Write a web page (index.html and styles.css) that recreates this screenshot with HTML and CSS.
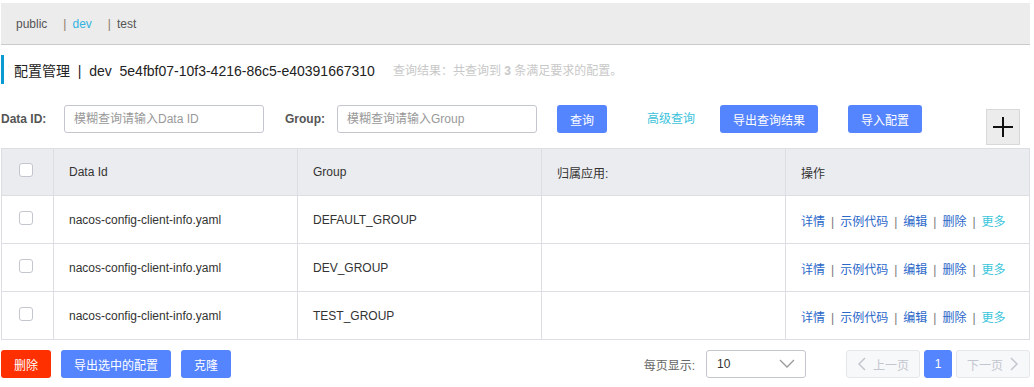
FILE: index.html
```html
<!DOCTYPE html>
<html lang="zh-CN">
<head>
    <meta charset="UTF-8">
    <title>配置管理</title>
    <link rel="stylesheet" href="styles.css">
</head>
<body>
    <div class="ns-bar">
        <span class="ns">public</span>
        <span class="ns active"><i>|</i>dev</span>
        <span class="ns"><i>|</i>test</span>
    </div>

    <div class="page-title">
        <span class="title-main">配置管理&nbsp;&nbsp;|&nbsp;&nbsp;dev&nbsp;&nbsp;5e4fbf07-10f3-4216-86c5-e40391667310</span>
        <span class="title-info">查询结果：共查询到 <b>3</b> 条满足要求的配置。</span>
    </div>

    <div class="search-row">
        <label class="field-label">Data ID:</label>
        <input class="field-input" placeholder="模糊查询请输入Data ID">
        <label class="field-label group-label">Group:</label>
        <input class="field-input" placeholder="模糊查询请输入Group">
        <button class="btn btn-primary btn-query">查询</button>
        <a class="adv-link">高级查询</a>
        <button class="btn btn-primary btn-export">导出查询结果</button>
        <button class="btn btn-primary btn-import">导入配置</button>
        <button class="btn-plus">
            <svg width="22" height="22" viewBox="0 0 22 22"><path d="M11 1v20M1 11h20" stroke="#111" stroke-width="2"/></svg>
        </button>
    </div>

    <table class="cfg-table">
        <thead>
            <tr>
                <th class="col-check"><span class="checkbox"></span></th>
                <th class="col-id">Data Id</th>
                <th class="col-group">Group</th>
                <th class="col-app">归属应用:</th>
                <th class="col-op">操作</th>
            </tr>
        </thead>
        <tbody>
            <tr>
                <td class="col-check"><span class="checkbox"></span></td>
                <td>nacos-config-client-info.yaml</td>
                <td>DEFAULT_GROUP</td>
                <td></td>
                <td class="ops"><a>详情</a><i>|</i><a>示例代码</a><i>|</i><a>编辑</a><i>|</i><a>删除</a><i>|</i><a class="more">更多</a></td>
            </tr>
            <tr>
                <td class="col-check"><span class="checkbox"></span></td>
                <td>nacos-config-client-info.yaml</td>
                <td>DEV_GROUP</td>
                <td></td>
                <td class="ops"><a>详情</a><i>|</i><a>示例代码</a><i>|</i><a>编辑</a><i>|</i><a>删除</a><i>|</i><a class="more">更多</a></td>
            </tr>
            <tr>
                <td class="col-check"><span class="checkbox"></span></td>
                <td>nacos-config-client-info.yaml</td>
                <td>TEST_GROUP</td>
                <td></td>
                <td class="ops"><a>详情</a><i>|</i><a>示例代码</a><i>|</i><a>编辑</a><i>|</i><a>删除</a><i>|</i><a class="more">更多</a></td>
            </tr>
        </tbody>
    </table>

    <div class="footer">
        <div class="footer-left">
            <button class="btn btn-danger btn-del">删除</button>
            <button class="btn btn-primary btn-export-sel">导出选中的配置</button>
            <button class="btn btn-primary btn-clone">克隆</button>
        </div>
        <div class="footer-right">
            <span class="page-size-label">每页显示:</span>
            <div class="select">
                <span>10</span>
                <svg width="16" height="10" viewBox="0 0 16 10"><path d="M1 1l7 7 7-7" fill="none" stroke="#999" stroke-width="1.3"/></svg>
            </div>
            <div class="pager">
                <button class="pg pg-prev">
                    <svg width="10" height="14" viewBox="0 0 10 14"><path d="M8 1L2 7l6 6" fill="none" stroke="#c4c6cf" stroke-width="1.5"/></svg>
                    上一页
                </button>
                <button class="pg pg-num">1</button>
                <button class="pg pg-next">
                    下一页
                    <svg width="10" height="14" viewBox="0 0 10 14"><path d="M2 1l6 6-6 6" fill="none" stroke="#c4c6cf" stroke-width="1.5"/></svg>
                </button>
            </div>
        </div>
    </div>
</body>
</html>
```

FILE: styles.css
```css
* { box-sizing: border-box; margin: 0; padding: 0; }
body {
    font-family: "Liberation Sans", Arial, "Noto Sans CJK SC", sans-serif;
    font-size: 12px;
    color: #333;
    background: #fff;
    width: 1034px;
    padding: 3px 4px 0 1px;
}
button { font-family: inherit; cursor: pointer; border: none; }

.ns-bar {
    height: 42px;
    background: #ececec;
    border-bottom: 1px solid #cbcbcb;
    display: flex;
    align-items: center;
    padding-left: 15px;
    font-size: 12px;
}
.ns { color: #555; margin-right: 16px; }
.ns i { font-style: normal; color: #8a7a6a; margin-right: 6px; }
.ns.active { color: #33b3df; }

.page-title {
    display: flex;
    align-items: center;
    height: 29px;
    margin-top: 10px;
    border-left: 3px solid #0a9ad2;
    padding-left: 10px;
}
.title-main { font-size: 14px; color: #222; }
.title-info { font-size: 12px; color: #c8c8c8; margin-left: 18px; }
.title-info b { font-weight: bold; }

.search-row {
    display: flex;
    align-items: flex-start;
    margin-top: 21px;
    height: 43px;
}
.field-label {
    font-weight: bold;
    font-size: 12px;
    color: #555;
    line-height: 28px;
    width: 63px;
}
.group-label { width: 52px; margin-left: 21px; }
.field-input {
    width: 200px;
    height: 28px;
    border: 1px solid #c4c6cf;
    border-radius: 3px;
    padding: 0 9px;
    font-size: 12px;
    font-family: inherit;
    outline: none;
}
.field-input::placeholder { color: #999; }
.btn {
    height: 28px;
    border-radius: 3px;
    font-size: 12px;
    color: #fff;
    padding: 0 12px;
}
.btn-primary { background: #5584ff; }
.btn-danger { background: #ff3000; }
.btn-query { margin-left: 20px; width: 50px; }
.adv-link { color: #3bc2dc; line-height: 28px; margin-left: 40px; }
.btn-export { margin-left: 25px; width: 98px; }
.btn-import { margin-left: 30px; width: 74px; }
.btn-plus {
    margin-left: 64px;
    margin-top: 4px;
    width: 34px;
    height: 36px;
    background: #ececec;
    border: 1px solid #d8d8d8;
    display: flex;
    align-items: center;
    justify-content: center;
}

.cfg-table {
    width: 1029px;
    border-collapse: collapse;
    table-layout: fixed;
    font-size: 12px;
}
.cfg-table th, .cfg-table td {
    border: 1px solid #dcdee3;
    text-align: left;
    padding: 0 15px;
    font-weight: normal;
    color: #333;
}
.cfg-table th { background: #ebecf0; height: 47px; }
.cfg-table td { height: 48px; }
.col-check { width: 52px; }
.col-id { width: 244px; }
.col-group { width: 244px; }
.col-app { width: 244px; }
.checkbox {
    display: inline-block;
    width: 14px;
    height: 14px;
    border: 1px solid #c4c6cf;
    border-radius: 3px;
    background: #fff;
    vertical-align: middle;
}
.cfg-table td.col-check, .cfg-table th.col-check { padding: 0 0 4px 17px; }
.ops a { color: #2a67c8; }
.ops a.more { color: #39c5dc; }
.ops i { font-style: normal; color: #777; margin: 0 6px; }
.cfg-table td.ops { padding-top: 1px; }

.footer {
    display: flex;
    justify-content: space-between;
    align-items: center;
    margin-top: 10px;
    width: 1029px;
}
.footer-left { display: flex; gap: 10px; }
.btn-del { width: 50px; }
.btn-export-sel { width: 110px; }
.btn-clone { width: 50px; }
.footer-right { display: flex; align-items: center; }
.page-size-label { color: #666; margin-right: 11px; }
.select {
    width: 100px;
    height: 28px;
    border: 1px solid #c4c6cf;
    border-radius: 3px;
    display: flex;
    align-items: center;
    justify-content: space-between;
    padding: 0 10px;
    color: #333;
}
.pager { display: flex; gap: 4px; margin-left: 40px; }
.pg {
    height: 28px;
    border-radius: 3px;
    font-size: 12px;
    background: #f7f8fa;
    border: 1px solid #e6e7eb;
    color: #c4c6cf;
    display: flex;
    align-items: center;
    justify-content: center;
    gap: 6px;
}
.pg-prev, .pg-next { width: 74px; }
.pg-num { width: 28px; background: #5584ff; border-color: #5584ff; color: #fff; }
```
